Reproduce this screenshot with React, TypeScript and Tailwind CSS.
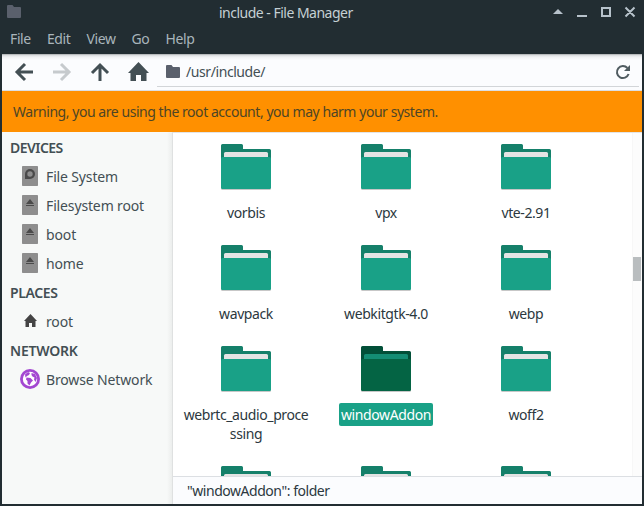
import React from 'react';

const folders = [
  ['vorbis'], ['vpx'], ['vte-2.91'],
  ['wavpack'], ['webkitgtk-4.0'], ['webp'],
  ['webrtc_audio_proce', 'ssing'], ['windowAddon'], ['woff2'],
  [], [], [],
];

function Folder({ selected }: { selected: boolean }) {
  const back = selected ? '#024f38' : '#15806a';
  const paper = selected ? '#148d74' : '#e4e4e4';
  const front = selected ? '#046444' : '#19a187';
  return (
    <svg width="50" height="47" viewBox="0 0 50 47" className="block shrink-0">
      <path d="M0 20v24.5q0 1.500 1.500 1.500h47q1.500 0 1.500-1.500V20z" fill="#000" opacity=".22" />
      <path d="M0 1.500Q0 0 1.500 0h19Q22 0 22 1.500V5h26.500Q50 5 50 6.500V20H0z" fill={back} />
      <path d="M3 9.500Q3 8 4.500 8h41Q47 8 47 9.500V20H3z" fill={paper} />
      <path d="M0 14.500Q0 13 1.500 13h47Q50 13 50 14.500V43.500Q50 45 48.500 45h-47Q0 45 0 43.500z" fill={front} />
    </svg>
  );
}

function SmallFolder({ className }: { className: string }) {
  return (
    <svg width="14" height="13" viewBox="0 0 14 13" className={className}>
      <path d="M0 1Q0 0 1 0h4.500l1.500 2H13q1 0 1 1v9q0 1-1 1H1q-1 0-1-1z" fill="currentColor" />
    </svg>
  );
}

function Drive({ disk }: { disk?: boolean }) {
  return (
    <svg width="20" height="20" viewBox="0 0 20 20" className="block">
      <rect x="2" y="0" width="16" height="20" rx=".7" fill="#8e8e8e" />
      {disk ? (
        <>
          <path d="M5 13V8a5 5 0 1 1 5 5z" fill="#4a4a4a" />
          <circle cx="10" cy="8" r="2.700" fill="#8e8e8e" />
        </>
      ) : (
        <path d="M10 4L14 9H6zM6 10h8v1H6z" fill="#4a4a4a" />
      )}
    </svg>
  );
}

function Home() {
  return (
    <svg width="20" height="20" viewBox="0 0 20 20" className="block">
      <path d="M10.500 3L17 10h-1.500v6H12v-4H9v4H5.500v-6H4z" fill="#444" />
    </svg>
  );
}

function Globe() {
  return (
    <svg width="20" height="20" viewBox="0 0 20 20" className="block">
      <circle cx="10" cy="10" r="10" fill="#a347d1" />
      <circle cx="10" cy="10" r="7.200" fill="#fff" />
      <path d="M6.500 8.500l4 .5 2.500 2.500-2 2L9.500 16.500 7.500 14.500V12l-1.500-1.500zM5 5.500l3-2.500 2 1L9 6 7 7 5.500 8.500zM11.500 4l3.500 1 2 4-1.500 4-1.500-2.500 .5-2-2-1-1-1.500z" fill="#a347d1" />
    </svg>
  );
}

function Heading({ className, children }: { className: string; children: React.ReactNode }) {
  return <div className={`flex h-[29px] items-center pb-[2px] pl-2 font-semibold ${className}`}>{children}</div>;
}

function Place({ icon, children }: { icon: React.ReactNode; children: React.ReactNode }) {
  return (
    <div className="flex h-[29px] items-start gap-1.5 pl-[18px] pt-[3px]">
      {icon}
      <span className="pt-px tracking-[-0.14px]">{children}</span>
    </div>
  );
}

export default function App() {
  return (
    <div className="flex h-[506px] w-[644px] flex-col overflow-hidden whitespace-nowrap bg-[#222d32] px-0.5 pb-0.5 font-['Noto_Sans',sans-serif] text-[14px] leading-[19px] text-[#434f54]">
      <header className="flex h-[26px] shrink-0 items-center text-[#c5d0d4]">
        <SmallFolder className="mb-[3px] ml-[5px] text-[#5a606c]" />
        <div className="mb-[2px] ml-[198px] grow tracking-[-0.51px]">include - File Manager</div>
        <svg width="96" height="26" viewBox="0 0 96 26" fill="none" stroke="#b7c2cb" strokeWidth="2">
          <path d="M7 14L12 9L17 14z" fill="#b7c2cb" stroke="none" />
          <path d="M31 16h10M56 8h8v8h-8zM79.500 7.500l9 9M88.500 7.500l-9 9" />
        </svg>
      </header>
      <nav className="flex h-7 shrink-0 gap-4 pl-2 pt-[3px] tracking-[-0.38px] text-[#a9b5bb]">
        <span>File</span><span>Edit</span><span>View</span><span>Go</span><span>Help</span>
      </nav>

      <div className="flex h-[37px] shrink-0 border-b border-[#dcdfe3] bg-[linear-gradient(#999d9f_0px,#d7d9db_1px,#f0f1f3_3px,#fbfcfe_6px)]">
        <svg width="155" height="36" viewBox="0 0 155 36" fill="none" stroke="#434f54" strokeWidth="3">
          <path d="M31 18H16M23 10l-8 8 8 8" />
          <path d="M51 18h15M59 10l8 8-8 8" stroke="#c6cacd" />
          <path d="M98 27V12M90 19l8-8 8 8" />
          <path d="M136.500 8L147 19h-2.500v8H139v-6h-5v6h-5.500v-8H126z" fill="#434f54" stroke="none" />
        </svg>
        <div className="mr-[3px] flex h-[33px] grow items-center border-b border-[#d2d5d8] pl-[9px]">
          <SmallFolder className="mt-[3px] text-[#5a606c]" />
          <span className="ml-1.5 mt-[3px] grow tracking-[-0.42px]">/usr/include/</span>
          <svg width="16" height="16" viewBox="0 0 16 16" className="mr-2 mt-[4px]">
            <path d="M13.600 10a6 6 0 1 1-1.200-6" fill="none" stroke="#505c61" strokeWidth="2" />
            <path d="M15 1v6H9z" fill="#505c61" />
          </svg>
        </div>
      </div>

      <div className="flex h-[41px] shrink-0 items-center bg-[#ff9000] pl-[11px] tracking-[-0.45px] text-[#4d4526]">
        Warning, you are using the root account, you may harm your system.
      </div>

      <div className="flex min-h-0 grow">
        <aside className="w-[171px] shrink-0 border-r border-[#dfe1e1] bg-[linear-gradient(to_right,#f7f9f8_165px,#eceeed_170px)] pt-[2px]">
          <Heading className="tracking-[-0.54px]">DEVICES</Heading>
          <Place icon={<Drive disk />}>File System</Place>
          <Place icon={<Drive />}>Filesystem root</Place>
          <Place icon={<Drive />}>boot</Place>
          <Place icon={<Drive />}>home</Place>
          <Heading className="tracking-[-0.4px]">PLACES</Heading>
          <Place icon={<Home />}>root</Place>
          <Heading className="tracking-[-0.22px]">NETWORK</Heading>
          <Place icon={<Globe />}>Browse Network</Place>
        </aside>
        <main className="flex min-w-0 grow flex-col bg-white text-[#2c383e]">
          <div className="flex h-[344px] shrink-0 border-t border-[#e2e4e6]">
            <div className="grid w-[459px] grid-cols-[140px_140px_140px] content-start gap-y-[21px] overflow-hidden pl-[3px] pt-[11px] tracking-[-0.4px]">
              {folders.map((lines, i) => (
                <div key={i} className="flex flex-col items-center gap-[10px]">
                  <Folder selected={i === 7} />
                  {lines.length > 0 && (
                    <div className={i === 7 ? 'h-[23px] rounded-[2px] bg-[#19a187] px-0.5 py-0.5 text-center text-white' : 'px-0.5 py-0.5 text-center'}>
                      {lines.map((line) => <div key={line}>{line}</div>)}
                    </div>
                  )}
                </div>
              ))}
            </div>
            <div className="grow border-l border-[#f7f7f7] bg-[#fcfcfc] pt-[124px]">
              <div className="h-6 w-2 bg-[#b9bdbf]" />
            </div>
          </div>
          <footer className="flex grow items-center border-t border-[#dcdfe3] bg-[#fbfcfe] pb-px pl-[14px] tracking-[-0.46px]">"windowAddon": folder</footer>
        </main>
      </div>
    </div>
  );
}
